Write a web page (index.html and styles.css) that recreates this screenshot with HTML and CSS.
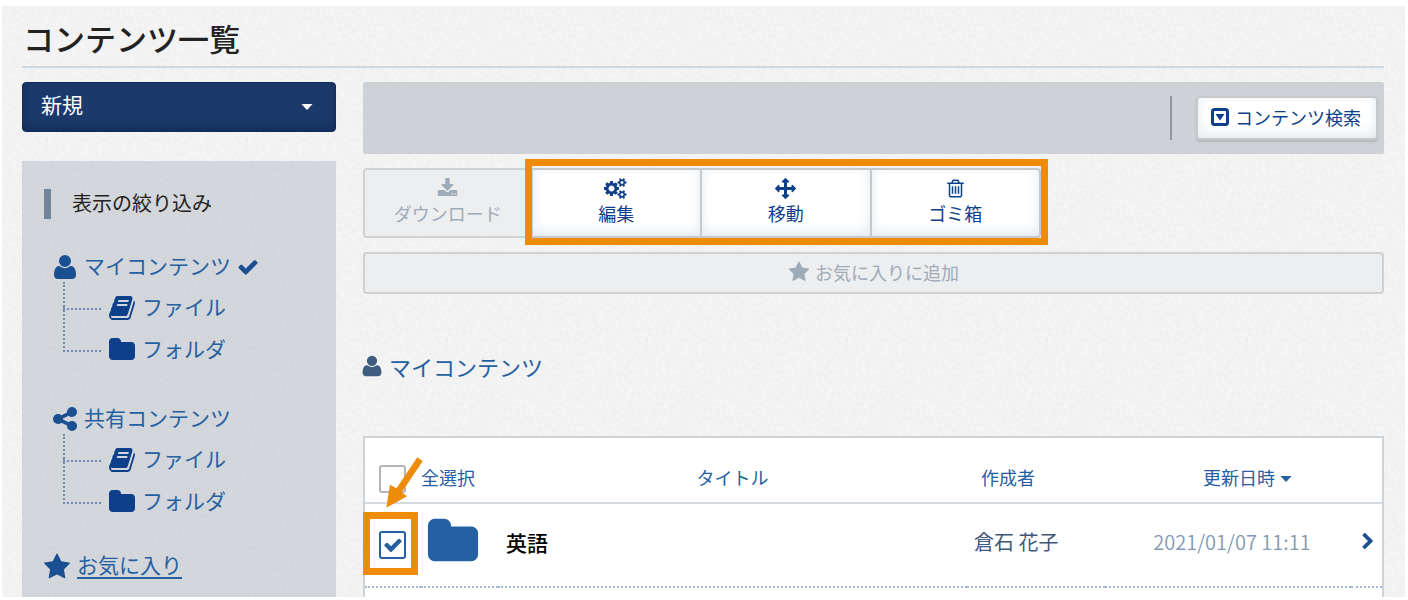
FILE: index.html
```html
<!DOCTYPE html>
<html lang="ja">
<head>
<meta charset="utf-8">
<meta name="viewport" content="width=device-width, initial-scale=1">
<title>コンテンツ一覧</title>
<link rel="stylesheet" href="styles.css">
</head>
<body>
<svg class="sprite" aria-hidden="true">
  <symbol id="user" viewBox="0 0 1792 1792"><path d="M1600 1405q0 120-73 189.500t-194 69.500h-874q-121 0-194-69.500t-73-189.500q0-53 3.500-103.500t14-109 26.500-108.500 43-97.500 62-81 85.500-53.500 111.500-20q9 0 42 21.500t74.500 48 108 48 133.500 21.500 133.500-21.500 108-48 74.500-48 42-21.500q61 0 111.500 20t85.500 53.500 62 81 43 97.500 26.500 108.500 14 109 3.500 103.500zm-320-893q0 159-112.500 271.500t-271.500 112.500-271.500-112.500-112.500-271.500 112.500-271.500 271.500-112.500 271.500 112.500 112.500 271.500z"/></symbol>
  <symbol id="check" viewBox="0 0 1792 1792"><path d="M1671 566q0 40-28 68l-724 724-136 136q-28 28-68 28t-68-28l-136-136-362-362q-28-28-28-68t28-68l136-136q28-28 68-28t68 28l294 295 656-657q28-28 68-28t68 28l136 136q28 28 28 68z"/></symbol>
  <symbol id="star" viewBox="0 0 1792 1792"><path d="M1728 647q0 22-26 48l-363 354 86 500q1 7 1 20 0 21-10.500 35.500t-30.500 14.500q-19 0-40-12l-449-236-449 236q-22 12-40 12-21 0-31.500-14.500t-10.500-35.500q0-6 2-20l86-500-364-354q-25-27-25-48 0-37 56-46l502-73 225-455q19-41 49-41t49 41l225 455 502 73q56 9 56 46z"/></symbol>
  <symbol id="folder" viewBox="0 0 1792 1792"><path d="M1728 608v704q0 92-66 158t-158 66h-1216q-92 0-158-66t-66-158v-960q0-92 66-158t158-66h320q92 0 158 66t66 158v32h672q92 0 158 66t66 158z"/></symbol>
  <symbol id="share" viewBox="0 0 1792 1792"><path d="M1344 1024q133 0 226.500 93.500t93.500 226.500-93.500 226.500-226.500 93.500-226.500-93.500-93.500-226.500q0-12 2-34l-360-180q-92 86-218 86-133 0-226.500-93.500t-93.500-226.500 93.500-226.500 226.500-93.500q126 0 218 86l360-180q-2-22-2-34 0-133 93.500-226.500t226.500-93.500 226.500 93.500 93.500 226.500-93.500 226.500-226.500 93.500q-126 0-218-86l-360 180q2 22 2 34t-2 34l360 180q92-86 218-86z"/></symbol>
  <symbol id="download" viewBox="0 0 1792 1792"><path d="M1344 1344q0-26-19-45t-45-19-45 19-19 45 19 45 45 19 45-19 19-45zm256 0q0-26-19-45t-45-19-45 19-19 45 19 45 45 19 45-19 19-45zm128-224v320q0 40-28 68t-68 28h-1472q-40 0-68-28t-28-68v-320q0-40 28-68t68-28h465l135 136q58 56 136 56t136-56l136-136h464q40 0 68 28t28 68zm-325-569q17 41-14 70l-448 448q-18 19-45 19t-45-19l-448-448q-31-29-14-70 17-39 59-39h256v-448q0-26 19-45t45-19h256q26 0 45 19t19 45v448h256q42 0 59 39z"/></symbol>
  <symbol id="move" viewBox="0 0 1792 1792"><path d="M1792 896q0 26-19 45l-256 256q-19 19-45 19t-45-19-19-45v-128h-384v384h128q26 0 45 19t19 45-19 45l-256 256q-19 19-45 19t-45-19l-256-256q-19-19-19-45t19-45 45-19h128v-384h-384v128q0 26-19 45t-45 19-45-19l-256-256q-19-19-19-45t19-45l256-256q19-19 45-19t45 19 19 45v128h384v-384h-128q-26 0-45-19t-19-45 19-45l256-256q19-19 45-19t45 19l256 256q19 19 19 45t-19 45-45 19h-128v384h384v-128q0-26 19-45t45-19 45 19l256 256q19 19 19 45z"/></symbol>
  <symbol id="trash" viewBox="0 0 1792 1792"><path d="M704 736v576q0 14-9 23t-23 9h-64q-14 0-23-9t-9-23v-576q0-14 9-23t23-9h64q14 0 23 9t9 23zm256 0v576q0 14-9 23t-23 9h-64q-14 0-23-9t-9-23v-576q0-14 9-23t23-9h64q14 0 23 9t9 23zm256 0v576q0 14-9 23t-23 9h-64q-14 0-23-9t-9-23v-576q0-14 9-23t23-9h64q14 0 23 9t9 23zm128 724v-948h-896v948q0 22 7 40.500t14.500 27 10.500 8.500h832q3 0 10.500-8.500t14.500-27 7-40.500zm-672-1076h448l-48-117q-7-9-17-11h-317q-10 2-17 11zm928 32v64q0 14-9 23t-23 9h-96v948q0 83-47 143.500t-113 60.500h-832q-66 0-113-58.500t-47-141.500v-952h-96q-14 0-23-9t-9-23v-64q0-14 9-23t23-9h309l70-167q15-37 54-63t79-26h320q40 0 79 26t54 63l70 167h309q14 0 23 9t9 23z"/></symbol>
  <symbol id="book" viewBox="0 0 1792 1792"><path d="M1703 478q40 57 18 129l-275 906q-19 64-76.500 107.500t-122.500 43.500h-923q-77 0-148.500-53.500t-99.500-131.500q-24-67-2-127 0-4 3-27t4-37q1-8-3-21.500t-3-19.500q2-11 8-21t16.500-23.500 16.500-23.500q23-38 45-91.500t30-91.500q3-10 .5-30t-.5-28q3-11 17-28t17-23q21-36 42-92t25-90q1-9-2.500-32t.5-28q4-13 22-30.500t22-22.500q19-26 42.500-84.500t27.500-96.500q1-8-3-25.500t-2-26.500q2-8 9-18t18-23 17-21q8-12 16.500-30.500t15-35 16-36 19.500-32 26.500-23.500 36-11.500 47.500 5.500l-1 3q38-9 51-9h761q74 0 114 56t18 130l-274 906q-36 119-71.500 153.500t-128.500 34.500h-869q-27 0-38 15-11 16-1 43 24 70 144 70h923q29 0 56-15.500t35-41.500l300-987q7-22 5-57 38 15 59 43zm-1064 2q-4 13 2 22.500t20 9.500h608q13 0 25.500-9.500t16.500-22.500l21-64q4-13-2-22.500t-20-9.500h-608q-13 0-25.500 9.500t-16.500 22.500zm-83 256q-4 13 2 22.500t20 9.500h608q13 0 25.500-9.500t16.500-22.500l21-64q4-13-2-22.500t-20-9.500h-608q-13 0-25.500 9.500t-16.500 22.500z"/></symbol>
  <symbol id="chevron" viewBox="0 0 1792 1792"><path d="M1363 941l-742 742q-19 19-45 19t-45-19l-166-166q-19-19-19-45t19-45l531-531-531-531q-19-19-19-45t19-45l166-166q19-19 45-19t45 19l742 742q19 19 19 45t-19 45z"/></symbol>
  <symbol id="cogs" viewBox="0 0 1920 1792"><path d="M832 896q0-106-75-181t-181-75-181 75-75 181 75 181 181 75 181-75 75-181zm768 512q0-52-38-90t-90-38-90 38-38 90q0 53 37.500 90.500t90.500 37.500 90.500-37.500 37.500-90.500zm0-1024q0-52-38-90t-90-38-90 38-38 90q0 53 37.500 90.500t90.500 37.500 90.500-37.500 37.500-90.500zm-384 421v185q0 10-7 19.500t-16 10.500l-155 24q-11 35-32 76 34 48 90 115 7 11 7 20 0 12-7 19-23 30-82.500 89.500t-78.500 59.500q-11 0-21-7l-115-90q-37 19-77 31-11 108-23 155-7 24-30 24h-186q-11 0-20-7.500t-10-17.500l-23-153q-34-10-75-31l-118 89q-7 7-20 7-11 0-21-8-144-133-144-160 0-9 7-19 10-14 41-53t47-61q-23-44-35-82l-152-24q-10-1-17-9.500t-7-19.500v-185q0-10 7-19.500t16-10.500l155-24q11-35 32-76-34-48-90-115-7-11-7-20 0-12 7-20 22-30 82-89t79-59q11 0 21 7l115 90q34-18 77-32 11-108 23-154 7-24 30-24h186q11 0 20 7.500t10 17.500l23 153q34 10 75 31l118-89q8-7 20-7 11 0 21 8 144 133 144 160 0 8-7 19-12 16-42 54t-45 60q23 48 34 82l152 23q10 2 17 10.500t7 19.500zm640 533v140q0 16-149 31-12 27-30 52 51 113 51 138 0 4-4 7-122 71-124 71-8 0-46-47t-52-68q-20 2-30 2t-30-2q-14 21-52 68t-46 47q-2 0-124-71-4-3-4-7 0-25 51-138-18-25-30-52-149-15-149-31v-140q0-16 149-31 13-29 30-52-51-113-51-138 0-4 4-7 4-2 35-20t59-34 30-16q8 0 46 46.500t52 67.500q20-2 30-2t30 2q51-71 92-112l6-2q4 0 124 70 4 3 4 7 0 25-51 138 17 23 30 52 149 15 149 31zm0-1024v140q0 16-149 31-12 27-30 52 51 113 51 138 0 4-4 7-122 71-124 71-8 0-46-47t-52-68q-20 2-30 2t-30-2q-14 21-52 68t-46 47q-2 0-124-71-4-3-4-7 0-25 51-138-18-25-30-52-149-15-149-31v-140q0-16 149-31 13-29 30-52-51-113-51-138 0-4 4-7 4-2 35-20t59-34 30-16q8 0 46 46.500t52 67.500q20-2 30-2t30 2q51-71 92-112l6-2q4 0 124 70 4 3 4 7 0 25-51 138 17 23 30 52 149 15 149 31z"/></symbol>
  <symbol id="caret-box" viewBox="0 0 20 20"><rect x="2.500" y="2.500" width="15" height="15" rx="2" fill="none" stroke="currentColor" stroke-width="3"/><path d="M5.500 7h9L10 13.500z"/></symbol>
  <symbol id="caret" viewBox="0 0 12 6"><path d="M.5 0h11L6.800 5.300q-.8.700-1.600 0z"/></symbol>
</svg>

<div class="page">
  <h1 class="page-title">コンテンツ一覧</h1>
  <div class="columns">
    <aside class="side">
      <button class="new-button" type="button">新規<svg class="caret"><use href="#caret"/></svg></button>
      <nav class="filter" aria-labelledby="filter-title">
        <h2 class="filter-title" id="filter-title">表示の絞り込み</h2>
        <div class="group">
          <a class="root" href="#my"><svg class="icon"><use href="#user"/></svg>マイコンテンツ<svg class="icon icon-check"><use href="#check"/></svg></a>
          <ul class="tree">
            <li class="branch"><a class="leaf" href="#my-files"><svg class="icon"><use href="#book"/></svg>ファイル</a></li>
            <li class="branch"><a class="leaf" href="#my-folders"><svg class="icon"><use href="#folder"/></svg>フォルダ</a></li>
          </ul>
        </div>
        <div class="group">
          <a class="root" href="#shared"><svg class="icon"><use href="#share"/></svg>共有コンテンツ</a>
          <ul class="tree">
            <li class="branch"><a class="leaf" href="#shared-files"><svg class="icon"><use href="#book"/></svg>ファイル</a></li>
            <li class="branch"><a class="leaf" href="#shared-folders"><svg class="icon"><use href="#folder"/></svg>フォルダ</a></li>
          </ul>
        </div>
        <a class="favorites" href="#favorites"><svg class="icon"><use href="#star"/></svg><span class="favorites-text">お気に入り</span></a>
      </nav>
    </aside>

    <main class="main">
      <div class="search-bar">
        <button class="search-button" type="button"><svg class="icon-search"><use href="#caret-box"/></svg>コンテンツ検索</button>
      </div>

      <div class="actions">
        <button class="action" type="button" disabled><svg class="action-icon"><use href="#download"/></svg>ダウンロード</button>
        <button class="action" type="button"><svg class="action-icon icon-cogs"><use href="#cogs"/></svg>編集</button>
        <button class="action" type="button"><svg class="action-icon"><use href="#move"/></svg>移動</button>
        <button class="action" type="button"><svg class="action-icon"><use href="#trash"/></svg>ゴミ箱</button>
        <span class="mark mark-actions"></span>
      </div>

      <button class="add-favorite" type="button" disabled><svg class="icon-star"><use href="#star"/></svg>お気に入りに追加</button>

      <h2 class="location"><svg class="icon-location"><use href="#user"/></svg><a class="location-link" href="#my">マイコンテンツ</a></h2>

      <div class="list">
        <table class="table">
          <colgroup><col class="col-check"><col class="col-kind"><col><col class="col-author"><col class="col-date"><col class="col-open"></colgroup>
          <thead>
            <tr>
              <th class="cell-check head-check"><input class="checkbox" type="checkbox" id="all"></th>
              <th class="cell-all"><label for="all">全選択</label></th>
              <th><a href="#sort-title">タイトル</a></th>
              <th class="head-author"><a href="#sort-author">作成者</a></th>
              <th class="head-date" colspan="2"><a href="#sort-date">更新日時<svg class="caret caret-sort"><use href="#caret"/></svg></a></th>
            </tr>
          </thead>
          <tbody>
            <tr>
              <td class="cell-check"><span class="tick"><input class="checkbox" type="checkbox" aria-label="英語を選択" checked><svg class="tick-mark"><use href="#check"/></svg></span></td>
              <td class="cell-kind"><svg class="icon-folder"><use href="#folder"/></svg></td>
              <td class="cell-title">英語</td>
              <td class="cell-author">倉石 花子</td>
              <td class="cell-date">2021/01/07 11:11</td>
              <td class="cell-open"><a href="#open" aria-label="開く"><svg class="icon-open"><use href="#chevron"/></svg></a></td>
            </tr>
          </tbody>
        </table>
        <span class="mark mark-check"></span>
        <svg class="arrow" viewBox="0 0 40 54" aria-hidden="true"><path d="M31.300 1.300l5.400 4L15.700 36.300l5.300 4L.3 51.700 4 28.700l6.500 3.600z"/></svg>
      </div>
    </main>
  </div>
</div>
</body>
</html>
```
FILE: styles.css
```css
:root {
  --navy: #0e3f8a;
  --blue: #1a5091;
  --link: #2560a2;
  --orange: #ee8c0a;
  --line: #ced3d8;
  --grain: url("data:image/svg+xml,%3Csvg xmlns='http://www.w3.org/2000/svg' width='200' height='200'%3E%3Cfilter id='n'%3E%3CfeTurbulence type='fractalNoise' baseFrequency='.28' numOctaves='2' stitchTiles='stitch'/%3E%3CfeColorMatrix values='0 0 0 0 .4 0 0 0 0 .4 0 0 0 0 .4 .16 0 0 0 -.05'/%3E%3C/filter%3E%3Crect width='200' height='200' filter='url(%23n)'/%3E%3C/svg%3E");
}

* { box-sizing: border-box; }

body {
  display: flex;
  min-height: 100vh;
  margin: 0;
  padding: 6px 3px 3px 2px;
  background: #fff;
  color: #222;
  font-family: "Noto Sans CJK JP", sans-serif;
  font-size: 18px;
  line-height: 24px;
}

button, input { margin: 0; font: inherit; }
button { cursor: pointer; }
a { color: inherit; text-decoration: none; }
svg { flex: none; fill: currentColor; }

.sprite { position: absolute; width: 0; height: 0; }

.page {
  display: flex;
  flex: 1;
  flex-direction: column;
  min-width: 0;
  padding: 0 21px 0 20px;
  background: var(--grain) #f5f5f5;
}

.page-title {
  margin: 0 0 14px;
  padding: 10px 0 6px 1px;
  border-bottom: 2px solid #cfd9e3;
  font-size: 31px;
  font-weight: 500;
  line-height: 44px;
}

.columns {
  display: grid;
  flex: 1;
  grid-template-columns: 314px minmax(0, 1fr);
  gap: 27px;
}

.side, .main { display: flex; flex-direction: column; }

.new-button {
  display: flex;
  align-items: center;
  justify-content: space-between;
  height: 50px;
  margin-bottom: 29px;
  padding: 0 22px 6px 18px;
  border: 1px solid #142d58;
  border-radius: 4px;
  background: #1b3a6b;
  box-shadow: inset 0 -4px 10px #142d58;
  color: #fff;
  font-size: 21px;
}

.caret { width: 12px; height: 6px; }
.new-button .caret { margin-top: 6px; }

.filter {
  flex: 1;
  padding: 28px 22px 10px;
  background: var(--grain) #d4d8dd;
  color: var(--link);
  font-size: 21px;
}

.filter-title {
  margin: 0 0 27px;
  padding: 0 0 2px 21px;
  border-left: 7px solid #72839a;
  color: #222;
  font-size: 20px;
  font-weight: 400;
  line-height: 28px;
}

.group { margin-bottom: 28px; }
.group + .group { margin-bottom: 24px; }

.icon { width: 28px; height: 28px; margin-top: 4px; color: var(--blue); }
.icon-check { width: 22px; height: 22px; margin-left: 1px; }

.root, .leaf, .favorites { display: flex; align-items: center; padding-bottom: 3px; }
.root { gap: 5px; height: 40px; padding-left: 7px; }
.leaf { gap: 6px; height: 42px; }
.leaf .icon { color: var(--navy); }

.tree { margin: 0; padding: 0 0 0 19px; list-style: none; }
.branch { display: flex; gap: 7px; }
.branch::before {
  content: "";
  width: 36px;
  height: 26px;
  margin-top: -4px;
  border: dotted #6f8db3;
  border-width: 0 0 2px 2px;
}
.branch + .branch::before { height: 43px; margin-top: -21px; }

.favorites { gap: 6px; height: 40px; margin-left: -1px; }
.favorites-text { border-bottom: 2px solid currentColor; line-height: 26px; }

.search-bar {
  display: flex;
  align-items: center;
  justify-content: flex-end;
  height: 72px;
  margin-bottom: 14px;
  padding-right: 6px;
  border-radius: 2px;
  background: #ced1d6;
}
.search-bar::before {
  content: "";
  width: 2px;
  height: 44px;
  margin-right: 24px;
  background: #8f979f;
}

.search-button, .action, .add-favorite {
  border: 2px solid #c6c8ca;
  border-radius: 4px;
  background: #fff;
  box-shadow: inset 0 -4px 12px #e3e9ef;
  color: var(--navy);
}

.search-button {
  display: flex;
  align-items: center;
  gap: 5px;
  height: 44px;
  padding: 0 15px 3px 12px;
  box-shadow: inset 0 -4px 12px #e3e9ef, 0 2px 2px #b4b8bd;
}
.icon-search { width: 20px; height: 20px; }

.actions {
  position: relative;
  display: grid;
  grid-template-columns: repeat(4, 1fr);
  width: 678px;
  max-width: 100%;
  margin-bottom: 14px;
}

.action {
  display: flex;
  flex-direction: column;
  align-items: center;
  gap: 2px;
  height: 70px;
  padding: 8px 0 0;
  border-left-width: 0;
  border-radius: 0;
}
.action:first-child { border-left-width: 2px; border-radius: 4px 0 0 4px; }
.action:nth-child(4) { border-radius: 0 4px 4px 0; }
.action-icon { width: 21px; height: 21px; }
.icon-cogs { width: 24px; }

.action:disabled, .add-favorite:disabled {
  border-color: #d0d1d3;
  background: #edeef0;
  box-shadow: none;
  color: #9eabb9;
  cursor: default;
}

.mark { position: absolute; border: 7px solid var(--orange); pointer-events: none; }
.mark-actions { inset: -9px -7px -7px 162px; }

.add-favorite {
  display: flex;
  align-items: center;
  justify-content: center;
  gap: 5px;
  height: 42px;
  padding: 0 0 2px;
}
.icon-star { width: 22px; height: 22px; }

.location {
  display: flex;
  align-items: center;
  gap: 5px;
  margin: 56px 0 54px -3px;
  color: #3f5d80;
  font-size: 22px;
  font-weight: 400;
  line-height: 32px;
}
.icon-location { width: 24px; height: 24px; }
.location-link { color: var(--link); }

.list {
  position: relative;
  flex: 1;
  border: 2px solid var(--line);
  border-bottom: 0;
  background: #fff;
}

.table { width: 100%; border-collapse: collapse; table-layout: fixed; }
.col-check { width: 56px; }
.col-kind { width: 77px; }
.col-author { width: 138px; }
.col-date { width: 246px; }
.col-open { width: 31px; }

th, td { padding: 0; vertical-align: middle; }
th {
  height: 65px;
  padding-top: 13px;
  border-bottom: 2px solid #d4dae0;
  color: var(--link);
  font-weight: 400;
}
td { height: 84px; border-bottom: 2px dotted #a3b9d6; }

.cell-check { padding-left: 14px; text-align: left; }
.head-check { padding-top: 17px; }
.cell-all { text-align: left; }
.head-author { padding-left: 14px; text-align: left; }
.head-date { padding-left: 8px; }
.caret-sort { margin-left: 5px; vertical-align: 3px; }

.checkbox {
  display: block;
  width: 27px;
  height: 28px;
  border: 2px solid #b5b5b5;
  border-radius: 3px;
  background: #fff;
  appearance: none;
}
.checkbox:checked { border-color: var(--link); }
.tick { display: grid; width: 27px; }
.tick > * { grid-area: 1 / 1; }
.tick-mark { place-self: center; width: 20px; height: 20px; color: var(--link); pointer-events: none; }

.cell-kind { padding: 0 0 6px 5px; }
.icon-folder { display: block; width: 54px; height: 54px; color: var(--link); }
.cell-title { padding: 0 0 7px 8px; color: #000; font-size: 21px; font-weight: 500; }
.cell-author { padding: 0 0 6px 7px; color: #3f5878; font-size: 20px; }
.cell-date { padding: 0 0 6px 8px; color: #8299b2; font-size: 20px; font-weight: 350; text-align: center; }
.cell-open { padding: 0 0 8px 8px; color: var(--blue); }
.icon-open { display: block; width: 18px; height: 18px; }

.mark-check { top: 74px; left: -2px; width: 55px; height: 63px; }
.arrow { position: absolute; top: 18px; left: 21px; width: 40px; height: 54px; fill: var(--orange); }
```
